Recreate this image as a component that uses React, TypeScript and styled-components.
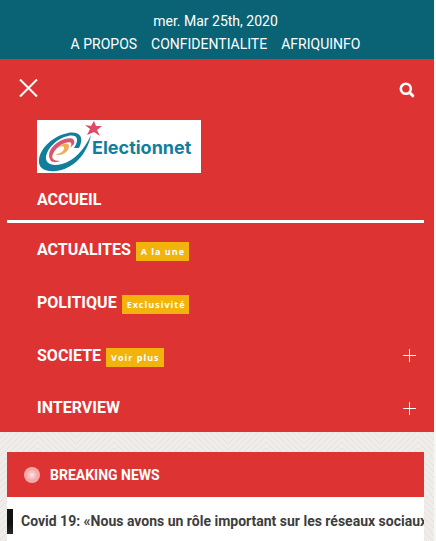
import React from "react";
import styled, { createGlobalStyle } from "styled-components";

const red = "#de3333";

const GlobalStyle = createGlobalStyle`
  *, *::before, *::after { box-sizing: border-box; }
  html { overflow: hidden; background: #f7f7f6; }
  body {
    margin: 0;
    padding-right: 2px;
    font-family: Roboto, "Liberation Sans", sans-serif;
  }
  a { color: inherit; text-decoration: none; }
`;

const Page = styled.div`
  position: relative;
  isolation: isolate;
  min-height: 100vh;
  overflow: hidden;
  background: #efece9;
`;

const Texture = styled.svg`
  position: absolute;
  inset: 0;
  z-index: -1;
  width: 100%;
  height: 100%;
`;

const TopBar = styled.header`
  display: flex;
  flex-direction: column;
  align-items: center;
  padding: 10px 3px 3px 0;
  background: #0a6375;
  color: #fff;
  font-size: 14px;
  line-height: 23px;
`;

const TopLinks = styled.nav`
  display: flex;
  gap: 14px;
`;

const Menu = styled.section`
  background: ${red};
  color: #fff;
`;

const Tools = styled.div`
  display: flex;
  justify-content: space-between;
  align-items: flex-end;
  height: 61px;
  padding: 0 19px 22px;
`;

const IconButton = styled.button`
  display: grid;
  place-items: center;
  padding: 0;
  border: 0;
  background: none;
  color: inherit;
`;

const LogoLink = styled.a`
  display: block;
  width: 164px;
  height: 53px;
  margin-left: 37px;
  background: #fff;
`;

const List = styled.ul`
  margin: 0;
  padding: 0 10px 0 7px;
  list-style: none;
`;

const Item = styled.li<{ $active?: boolean }>`
  display: flex;
  align-items: center;
  height: 53px;
  padding: 0 8px 0 30px;

  ${(p) =>
    p.$active &&
    `
    height: 50px;
    padding-top: 6px;
    border-bottom: 3px solid #fff;
  `}

  &:last-child {
    height: 50px;
    align-items: flex-start;
    padding-top: 14px;
  }
`;

const ItemLink = styled.a`
  display: flex;
  align-items: center;
  gap: 5px;
  font-size: 16px;
  font-weight: 700;
  line-height: 24px;
`;

const Badge = styled.span`
  margin-top: 4px;
  padding: 0 4px 0 5px;
  background: #f2b30d;
  font-family: "Open Sans", sans-serif;
  font-size: 9px;
  line-height: 19px;
  letter-spacing: 1px;
`;

const Expand = styled(IconButton)`
  height: 24px;
  margin-left: auto;
`;

const News = styled.section`
  margin: 20px 10px 0 7px;
  background: #fff;
`;

const NewsTitle = styled.h2`
  display: flex;
  align-items: center;
  gap: 10px;
  height: 45px;
  margin: 0;
  padding-left: 17px;
  background: ${red};
  color: #fff;
  font-size: 14px;
  font-weight: 700;
`;

const Ticker = styled.div`
  display: flex;
  align-items: center;
  gap: 8px;
  height: 48px;
  overflow: hidden;
  white-space: nowrap;
  color: #3d3d3d;
  font-size: 14px;
  font-weight: 700;
`;

const Thumb = styled.span`
  flex: none;
  width: 6px;
  height: 25px;
  background: linear-gradient(#111 60%, #242a2b);
`;

const items = [
  { label: "ACCUEIL", active: true },
  { label: "ACTUALITES", badge: "A la une" },
  { label: "POLITIQUE", badge: "Exclusivité" },
  { label: "SOCIETE", badge: "Voir plus", sub: true },
  { label: "INTERVIEW", sub: true },
];

const Logo = () => (
  <svg width="164" height="53" viewBox="0 0 164 53" role="img" aria-label="Electionnet">
    <path
      d="M42 28C48 17 42 11 31 13C16 16 3 28 2 40C1 49 9 52 19 51C36 49 50 35 54 15C47 30 37 41 25 44C14 47 8 43 9 36C11 27 21 18 31 16C40 14 43 19 37 28Z"
      fill="#137e9c"
    />
    <path
      d="M37 24C39 17 31 17 23 21C14 26 9 34 14 41C17 43 21 42 23 41C16 41 14 38 16 34C18 29 23 25 28 23C34 21 36 23 33 28Z"
      fill="#dc5570"
    />
    <path
      d="M32 26C32 22 25 23 20 28C25 25 28 26 27 29C26 32 22 34 18 34C24 37 32 32 32 26Z"
      fill="#efae55"
    />
    <path d="M57 1L59 6L65 6L60 10L63 16L57 12L50 15L53 9L48 5L54 6Z" fill="#df4a67" />
    <text x="55" y="34" fill="#137e9c" fontFamily="Inter, sans-serif" fontSize="18" fontWeight="700">
      Electionnet
    </text>
  </svg>
);

export default function App() {
  return (
    <>
      <GlobalStyle />
      <Page>
        <Texture aria-hidden="true">
          <defs>
            <pattern id="weave" width="76" height="38" patternUnits="userSpaceOnUse">
              <path
                d="M0 38L38 0L76 38M0 32L32 0M0 26L26 0M0 20L20 0M0 14L14 0M0 8L8 0M44 0L76 32M50 0L76 26M56 0L76 20M62 0L76 14M68 0L76 8M6 38L38 6L70 38M12 38L38 12L64 38M18 38L38 18L58 38M24 38L38 24L52 38M30 38L38 30L46 38"
                fill="none"
                stroke="#e5e2de"
              />
            </pattern>
          </defs>
          <rect width="100%" height="100%" fill="url(#weave)" />
        </Texture>
        <TopBar>
          <time dateTime="2020-03-25">mer. Mar 25th, 2020</time>
          <TopLinks>
            <a href="#a-propos">A PROPOS</a>
            <a href="#confidentialite">CONFIDENTIALITE</a>
            <a href="#afriquinfo">AFRIQUINFO</a>
          </TopLinks>
        </TopBar>
        <Menu>
          <Tools>
            <IconButton type="button" aria-label="Fermer le menu">
              <svg width="19" height="19" viewBox="0 0 19 19" stroke="#fff" strokeWidth="2">
                <path d="M1 0.5L18 17.5M18 0.5L1 17.5" />
              </svg>
            </IconButton>
            <IconButton type="button" aria-label="Rechercher">
              <svg width="16" height="16" viewBox="0 0 16 16" fill="none" stroke="#fff">
                <circle cx="6.8" cy="6.8" r="5" strokeWidth="2.6" />
                <path d="M10.8 10.8L13.8 13.8" strokeWidth="3" strokeLinecap="round" />
              </svg>
            </IconButton>
          </Tools>
          <LogoLink href="#accueil">
            <Logo />
          </LogoLink>
          <nav>
            <List>
              {items.map((item) => (
                <Item key={item.label} $active={item.active}>
                  <ItemLink href={"#" + item.label.toLowerCase()}>
                    {item.label}
                    {item.badge && <Badge>{item.badge}</Badge>}
                  </ItemLink>
                  {item.sub && (
                    <Expand type="button" aria-label={"Ouvrir " + item.label}>
                      <svg width="13" height="13" viewBox="0 0 13 13" stroke="#fff">
                        <path d="M6.5 0V13M0 6.5H13" />
                      </svg>
                    </Expand>
                  )}
                </Item>
              ))}
            </List>
          </nav>
        </Menu>
        <News>
          <NewsTitle>
            <svg width="16" height="16" viewBox="0 0 16 16" aria-hidden="true">
              <circle cx="8" cy="8" r="8" fill="#f5aaaa" />
              <circle cx="8" cy="8" r="4.5" fill="#f8c0c0" />
              <circle cx="8" cy="8" r="2" fill="#fbdede" />
            </svg>
            BREAKING NEWS
          </NewsTitle>
          <Ticker>
            <Thumb />
            <a href="#covid-19">Covid 19: «Nous avons un rôle important sur les réseaux sociaux</a>
          </Ticker>
        </News>
      </Page>
    </>
  );
}
